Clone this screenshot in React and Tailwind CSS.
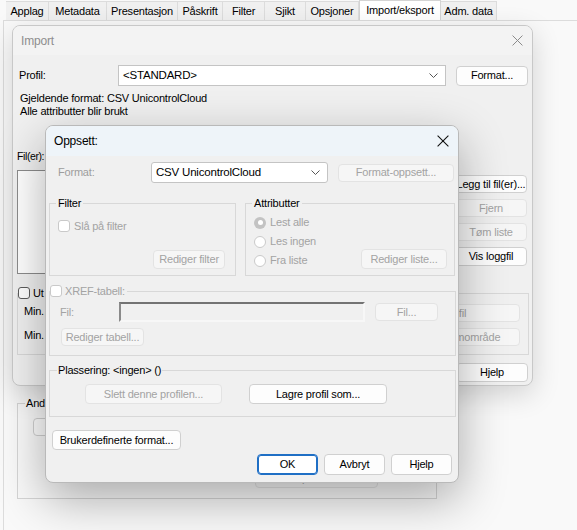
import React from 'react';

const FONT = "font-['Liberation_Sans',Arial,sans-serif] tracking-[-0.2px]";

function Btn({ children, disabled, primary, className = '' }) {
  const look = disabled
    ? 'border-[#e3e3e3] bg-[#f6f6f6] text-[#a3a3a3]'
    : primary
    ? 'border-[#1f6fc5] bg-white text-black shadow-[inset_0_0_0_1px_#1f6fc5]'
    : 'border-[#d0d0d0] bg-[#fdfdfd] text-black';
  return (
    <div
      className={`flex items-center justify-center whitespace-nowrap rounded-[4px] border text-[11px] leading-none ${look} ${className}`}
    >
      {children}
    </div>
  );
}

function Chevron() {
  return (
    <svg width="9" height="5" viewBox="0 0 9 5" className="shrink-0">
      <polyline points="0.5,0.5 4.5,4.5 8.5,0.5" fill="none" stroke="#555" strokeWidth="1" />
    </svg>
  );
}

function Combo({ value, className = '' }) {
  return (
    <div
      className={`flex items-center justify-between border border-[#c4c4c4] bg-white pl-[4px] pr-[7px] text-[11.5px] text-black ${className}`}
    >
      <span>{value}</span>
      <Chevron />
    </div>
  );
}

function Check({ disabled }) {
  return (
    <span
      className={`inline-block h-[12px] w-[12px] shrink-0 rounded-[3px] border bg-white ${
        disabled ? 'border-[#c9c9c9]' : 'border-[#5c5c5c]'
      }`}
    />
  );
}

function Radio({ checked, label }) {
  return (
    <div className="flex h-[19px] items-center gap-[4px] text-[11px] text-[#a3a3a3]">
      {checked ? (
        <span className="flex h-[12px] w-[12px] items-center justify-center rounded-full bg-[#c3c3c3]">
          <span className="h-[5px] w-[5px] rounded-full bg-white" />
        </span>
      ) : (
        <span className="h-[12px] w-[12px] rounded-full border border-[#c9c9c9] bg-white" />
      )}
      <span>{label}</span>
    </div>
  );
}

function CloseX({ color, size }) {
  return (
    <svg width={size} height={size} viewBox="0 0 10 10">
      <path d="M0.5 0.5 L9.5 9.5 M9.5 0.5 L0.5 9.5" stroke={color} strokeWidth="0.9" fill="none" />
    </svg>
  );
}

const tabs = [
  ['Applag', 'w-[43px]'],
  ['Metadata', 'w-[58px]'],
  ['Presentasjon', 'w-[71px]'],
  ['Påskrift', 'w-[45px]'],
  ['Filter', 'w-[42px]'],
  ['Sjikt', 'w-[41px]'],
  ['Opsjoner', 'w-[53px]'],
];

export default function App() {
  return (
    <div className={`relative h-[530px] w-[577px] overflow-hidden bg-[#f9f9f9] ${FONT}`}>
      {/* tab strip */}
      <div className="flex h-[20px] items-end pl-[6px]">
        {tabs.map(([t, w]) => (
          <div
            key={t}
            className={`flex h-[19px] items-center justify-center border-r border-t border-[#dcdcdc] bg-[#f0f0f0] text-[11px] text-black ${w}`}
          >
            {t}
          </div>
        ))}
        <div className="flex h-[20px] w-[82px] items-center justify-center border-x border-t border-[#d4d4d4] bg-white text-[11px] text-black">
          Import/eksport
        </div>
        <div className="flex h-[19px] w-[56px] items-center justify-center border-r border-t border-[#dcdcdc] bg-[#f0f0f0] text-[11px] text-black">
          Adm. data
        </div>
      </div>

      {/* page behind the dialogs */}
      <div className="ml-[3px] h-[510px] border-l border-t border-[#dcdcdc] bg-[#f9f9f9] px-[13px]">
        <fieldset className="mt-[375px] h-[103px] w-[420px] border border-[#d5d5d5] px-[15px]">
          <legend className="-ml-[8px] px-[1px] text-[11px] leading-[14px] text-black">Andre</legend>
          <div className="mt-[8px] flex">
            <Btn className="h-[18px] w-[120px]">Innstillinger...</Btn>
          </div>
          <div className="mt-[33px] flex pl-[222px]">
            <Btn disabled className="h-[19px] w-[123px]">Eksport info...</Btn>
          </div>
        </fieldset>
      </div>

      {/* Import dialog */}
      <div className="absolute left-[12px] top-[25px] h-[361px] w-[521px] overflow-hidden rounded-[8px] border border-[#c8c8c8] bg-[#f0f0f0] shadow-[0_8px_28px_rgba(0,0,0,0.16)]">
        <div className="flex h-[29px] items-center justify-between bg-[#f3f3f3] pl-[8px] pr-[9px]">
          <span className="text-[12px] text-[#8e8e8e]">Import</span>
          <CloseX color="#8a8a8a" size={11} />
        </div>
        <div className="pl-[4px]">
          <div className="mt-[10px] flex h-[21px] items-center">
            <span className="w-[101px] pl-[2px] text-[11px] text-black">Profil:</span>
            <Combo value="<STANDARD>" className="h-[21px] w-[328px]" />
            <Btn className="ml-[10px] h-[20px] w-[72px]">Format...</Btn>
          </div>
          <div className="mt-[6px] pl-[3px] text-[11px] leading-[13px] text-black">
            <p>Gjeldende format: CSV UnicontrolCloud</p>
            <p>Alle attributter blir brukt</p>
          </div>
          <p className="mt-[31px] text-[10.5px] leading-[14px] tracking-[-0.4px] text-black">Fil(er):</p>
          <div className="mt-[7px] flex">
            <div className="h-[104px] w-[428px] border border-[#8c8c8c] bg-white" />
            <div className="ml-[10px] mt-[5px] flex w-[72px] flex-col gap-[6px]">
              <Btn className="h-[18px] px-0">Legg til fil(er)...</Btn>
              <Btn disabled className="h-[18px]">Fjern</Btn>
              <Btn disabled className="h-[18px]">Tøm liste</Btn>
              <Btn className="h-[19px]">Vis loggfil</Btn>
            </div>
          </div>
          <fieldset className="mt-[12px] h-[69px] w-[512px] border border-[#d8d8d8]">
            <legend className="flex items-center gap-[3px] pr-[2px] text-[11px] leading-[14px] text-black">
              <Check />
              <span>Ut</span>
            </legend>
            <div className="flex">
              <div className="flex flex-col pl-[6px] text-[11px] leading-[14px] text-black">
                <span className="mt-[4px]">Min.</span>
                <span className="mt-[10px]">Min.</span>
              </div>
              <div className="ml-auto mr-[8px] flex w-[150px] flex-col gap-[6px]">
                <Btn disabled className="mt-[4px] h-[18px]">Les fra fil</Btn>
                <Btn disabled className="h-[18px]">Hent fra mellomområde</Btn>
              </div>
            </div>
          </fieldset>
          <div className="mt-[8px] flex pl-[439px]">
            <Btn className="h-[19px] w-[72px]">Hjelp</Btn>
          </div>
        </div>
      </div>

      {/* Oppsett dialog */}
      <div className="absolute left-[45px] top-[125px] h-[358px] w-[414px] overflow-hidden rounded-[8px] border border-[#b9b9b9] bg-[#f0f0f0] shadow-[0_16px_48px_rgba(0,0,0,0.32)]">
        <div className="flex h-[30px] items-center justify-between bg-[#eef4f9] pl-[8px] pr-[9px]">
          <span className="text-[12px] text-black">Oppsett:</span>
          <CloseX color="#111" size={12} />
        </div>
        <div className="px-[3px]">
          <div className="mt-[6px] flex h-[21px] items-center">
            <span className="w-[102px] pl-[9px] text-[11px] text-[#9d9d9d]">Format:</span>
            <Combo value="CSV UnicontrolCloud" className="h-[21px] w-[177px] rounded-[3px]" />
            <Btn disabled className="ml-[10px] h-[18px] w-[116px]">Format-oppsett...</Btn>
          </div>

          <div className="mt-[13px] flex gap-[9px]">
            <fieldset className="h-[80px] w-[188px] border border-[#d8d8d8]">
              <legend className="ml-[6px] px-[2px] text-[11px] leading-[14px] text-black">Filter</legend>
              <div className="mt-[9px] flex items-center gap-[4px] pl-[8px] text-[11px] leading-[14px] text-[#a3a3a3]">
                <Check disabled />
                <span>Slå på filter</span>
              </div>
              <div className="mt-[17px] flex justify-end pr-[10px]">
                <Btn disabled className="h-[19px] w-[72px]">Rediger filter</Btn>
              </div>
            </fieldset>
            <fieldset className="h-[80px] w-[211px] border border-[#d8d8d8]">
              <legend className="ml-[6px] px-[2px] text-[11px] leading-[14px] text-black">Attributter</legend>
              <div className="mt-[3px] flex items-end justify-between pl-[8px] pr-[7px]">
                <div>
                  <Radio checked label="Lest alle" />
                  <Radio label="Les ingen" />
                  <Radio label="Fra liste" />
                </div>
                <Btn disabled className="mb-[1px] h-[20px] w-[86px]">Rediger liste...</Btn>
              </div>
            </fieldset>
          </div>

          <fieldset className="mt-[8px] h-[72px] w-[407px] border border-[#d8d8d8]">
            <legend className="flex items-center gap-[3px] pr-[2px] text-[11px] leading-[14px] text-[#a3a3a3]">
              <Check disabled />
              <span>XREF-tabell:</span>
            </legend>
            <div className="mt-[4px] flex items-center">
              <span className="w-[69px] pl-[10px] text-[11px] text-[#a3a3a3]">Fil:</span>
              <div className="h-[20px] w-[246px] border-2 border-b-[#f7f7f7] border-l-[#8a8a8a] border-r-[#f7f7f7] border-t-[#737373] bg-[#f0f0f0]" />
              <Btn disabled className="ml-[10px] h-[18px] w-[63px]">Fil...</Btn>
            </div>
            <div className="mt-[6px] flex pl-[11px]">
              <Btn disabled className="h-[18px] w-[83px]">Rediger tabell...</Btn>
            </div>
          </fieldset>

          <fieldset className="mt-[7px] h-[54px] w-[407px] border border-[#d8d8d8]">
            <legend className="ml-[7px] px-[1px] text-[11px] leading-[14px] text-black">Plassering: &lt;ingen&gt; ()</legend>
            <div className="mt-[7px] flex gap-[27px] pl-[35px]">
              <Btn disabled className="h-[20px] w-[137px]">Slett denne profilen...</Btn>
              <Btn className="h-[20px] w-[138px]">Lagre profil som...</Btn>
            </div>
          </fieldset>

          <div className="mt-[13px] flex pl-[3px]">
            <Btn className="h-[20px] w-[129px]">Brukerdefinerte format...</Btn>
          </div>
          <div className="mt-[4px] flex justify-end gap-[6px] pr-[3px]">
            <Btn primary className="h-[21px] w-[61px]">OK</Btn>
            <Btn className="h-[21px] w-[61px]">Avbryt</Btn>
            <Btn className="h-[21px] w-[61px]">Hjelp</Btn>
          </div>
        </div>
      </div>
    </div>
  );
}
